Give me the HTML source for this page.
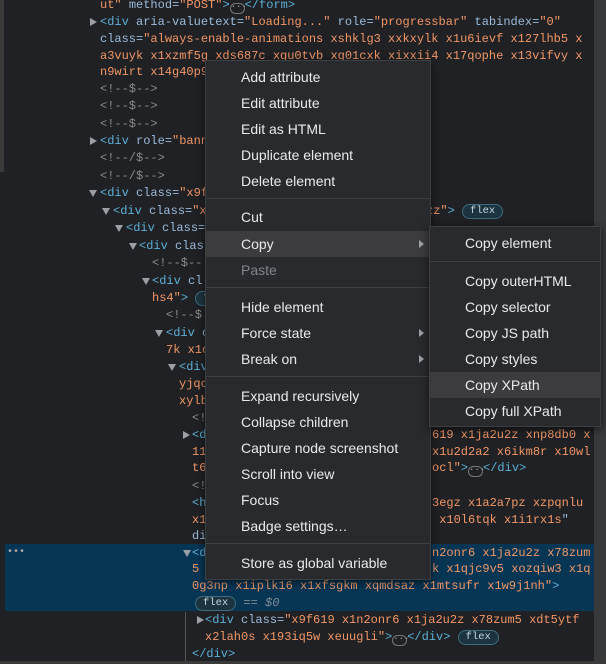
<!DOCTYPE html>
<html><head><meta charset="utf-8"><style>
*{margin:0;padding:0;box-sizing:border-box}
html,body{width:606px;height:664px;overflow:hidden;background:#202124}
body{position:relative;font-family:"Liberation Mono",monospace;font-size:12px}
.l{position:absolute;white-space:pre;height:17px;line-height:17px;color:#9aa0a6}
.t{color:#5db0d7}.a{color:#9bbbdc}.v{color:#f29766}.c{color:#8b8b8b}
.tri{position:absolute;width:0;height:0;border-left:4px solid transparent;border-right:4px solid transparent;border-top:7px solid #9aa0a6}
.trr{position:absolute;width:0;height:0;border-top:4px solid transparent;border-bottom:4px solid transparent;border-left:7px solid #9aa0a6}
.badge{display:inline-block;border:1px solid #3e6d80;background:#1c3440;color:#c6d6dd;border-radius:8px;font-size:10.5px;line-height:13px;padding:0 7px;vertical-align:1px}
.el{display:inline-block;width:15px;height:11px;border:1px solid #777;border-radius:6px;color:#aaa;font-size:9px;line-height:7px;text-align:center;vertical-align:-1px}
.sel{position:absolute;left:5px;top:544px;width:589px;height:67px;background:#073655}
.menu{position:absolute;background:#292a2d;border:1px solid #3c4043;box-shadow:0 2px 8px rgba(0,0,0,.6);font-family:"Liberation Sans",sans-serif;font-size:14px;color:#e8eaed}
.mi{position:absolute;left:0;right:0;height:26px;line-height:26px;white-space:nowrap}
.hv{background:#3c3c3f}
.sep{position:absolute;left:0;right:0;height:1px;background:#3c4043}
.arr{position:absolute;right:6px;top:9px;width:0;height:0;border-top:4px solid transparent;border-bottom:4px solid transparent;border-left:5px solid #9aa0a6}
</style></head><body>
<div style="position:absolute;left:0;top:0;width:4px;height:172px;background:#3a3a3a"></div>
<div style="position:absolute;left:594px;top:0;width:12px;height:664px;background:#38393b"></div>
<div class="sel"></div>
<div style="position:absolute;left:185px;top:612px;width:1px;height:52px;background:#555"></div>

<div class="l" style="left:100px;top:-3px"><span class="v">ut"</span> <span class="a">method=</span><span class="v">"POST"</span><span class="t">&gt;</span><span class="el">···</span><span class="t">&lt;/form&gt;</span></div>
<div class="trr" style="left:90px;top:18px"></div>
<div class="l" style="left:100px;top:14px"><span class="t">&lt;div</span> <span class="a">aria-valuetext=</span><span class="v">"Loading..."</span> <span class="a">role=</span><span class="v">"progressbar"</span> <span class="a">tabindex=</span><span class="v">"0"</span></div>
<div class="l" style="left:100px;top:31px"><span class="a">class=</span><span class="v">"always-enable-animations xshklg3 xxkxylk x1u6ievf x127lhb5 x</span></div>
<div class="l" style="left:100px;top:48px"><span class="v">a3vuyk x1xzmf5g xds687c xgu0tvb xg01cxk xixxii4 x17qophe x13vifvy x</span></div>
<div class="l" style="left:100px;top:64px"><span class="v">n9wirt x14g40p9</span></div>
<div class="l c" style="left:100px;top:81px">&lt;!--$--&gt;</div>
<div class="l c" style="left:100px;top:98px">&lt;!--$--&gt;</div>
<div class="l c" style="left:100px;top:116px">&lt;!--$--&gt;</div>
<div class="trr" style="left:90px;top:137px"></div>
<div class="l" style="left:100px;top:133px"><span class="t">&lt;div</span> <span class="a">role=</span><span class="v">"banner"</span></div>
<div class="l c" style="left:100px;top:150px">&lt;!--/$--&gt;</div>
<div class="l c" style="left:100px;top:168px">&lt;!--/$--&gt;</div>
<div class="tri" style="left:89px;top:190px"></div>
<div class="l" style="left:100px;top:185px"><span class="t">&lt;div</span> <span class="a">class=</span><span class="v">"x9f</span></div>
<div class="tri" style="left:102px;top:208px"></div>
<div class="l" style="left:113px;top:203px"><span class="t">&lt;div</span> <span class="a">class=</span><span class="v">"x</span></div>
<div class="l" style="left:426px;top:203px"><span class="v">zz"</span><span class="t">&gt;</span> <span class="badge">flex</span></div>
<div class="tri" style="left:115px;top:225px"></div>
<div class="l" style="left:126px;top:220px"><span class="t">&lt;div</span> <span class="a">class=</span></div>
<div class="tri" style="left:129px;top:243px"></div>
<div class="l" style="left:139px;top:238px"><span class="t">&lt;div</span> <span class="a">clas</span></div>
<div class="l c" style="left:152px;top:255px">&lt;!--$--</div>
<div class="tri" style="left:142px;top:278px"></div>
<div class="l" style="left:152px;top:273px"><span class="t">&lt;div</span> <span class="a">cl</span></div>
<div class="l" style="left:152px;top:290px"><span class="v">hs4"</span><span class="t">&gt;</span> <span class="badge">flex</span></div>
<div class="l c" style="left:166px;top:307px">&lt;!--$</div>
<div class="tri" style="left:155px;top:330px"></div>
<div class="l" style="left:166px;top:325px"><span class="t">&lt;div</span> <span class="a">c</span></div>
<div class="l" style="left:166px;top:342px"><span class="v">7k x1c</span></div>
<div class="tri" style="left:168px;top:364px"></div>
<div class="l" style="left:179px;top:359px"><span class="t">&lt;div</span></div>
<div class="l" style="left:179px;top:376px"><span class="v">yjqc</span></div>
<div class="l" style="left:179px;top:393px"><span class="v">xylb</span></div>
<div class="l c" style="left:192px;top:410px">&lt;!</div>
<div class="trr" style="left:183px;top:431px"></div>
<div class="l" style="left:192px;top:427px"><span class="t">&lt;d</span></div>
<div class="l" style="left:432px;top:427px"><span class="v">619 x1ja2u2z xnp8db0 x</span></div>
<div class="l" style="left:192px;top:444px"><span class="v">11</span></div>
<div class="l" style="left:432px;top:444px"><span class="v">x1u2d2a2 x6ikm8r x10wl</span></div>
<div class="l" style="left:192px;top:460px"><span class="v">t6</span></div>
<div class="l" style="left:432px;top:460px"><span class="v">ocl"</span><span class="t">&gt;</span><span class="el">···</span><span class="t">&lt;/div&gt;</span></div>
<div class="l c" style="left:192px;top:478px">&lt;!</div>
<div class="l" style="left:192px;top:495px"><span class="t">&lt;h</span></div>
<div class="l" style="left:432px;top:495px"><span class="v">3egz x1a2a7pz xzpqnlu</span></div>
<div class="l" style="left:192px;top:512px"><span class="v">x1</span></div>
<div class="l" style="left:432px;top:512px"><span class="v"> x10l6tqk x1i1rx1s</span><span class="a">"</span></div>
<div class="l" style="left:192px;top:528px"><span class="a">di</span></div>
<div class="l" style="left:7px;top:544px;color:#aaa;font-size:10px">•••</div>
<div class="tri" style="left:183px;top:550px"></div>
<div class="l" style="left:192px;top:545px"><span class="t">&lt;d</span></div>
<div class="l" style="left:432px;top:545px"><span class="v">n2onr6 x1ja2u2z x78zum</span></div>
<div class="l" style="left:192px;top:561px"><span class="v">5</span></div>
<div class="l" style="left:432px;top:561px"><span class="v">k x1qjc9v5 xozqiw3 x1q</span></div>
<div class="l" style="left:192px;top:578px"><span class="v">0g3np x1iplk16 x1xfsgkm xqmdsaz x1mtsufr x1w9j1nh"</span><span class="t">&gt;</span></div>
<div class="l" style="left:195px;top:595px"><span class="badge">flex</span> <span style="color:#7f8b96;font-style:italic">== $0</span></div>
<div class="trr" style="left:197px;top:616px"></div>
<div class="l" style="left:205px;top:612px"><span class="t">&lt;div</span> <span class="a">class=</span><span class="v">"x9f619 x1n2onr6 x1ja2u2z x78zum5 xdt5ytf</span></div>
<div class="l" style="left:205px;top:629px"><span class="v">x2lah0s x193iq5w xeuugli"</span><span class="t">&gt;</span><span class="el">···</span><span class="t">&lt;/div&gt;</span> <span class="badge">flex</span></div>
<div class="l" style="left:192px;top:646px"><span class="t">&lt;/div&gt;</span></div>
<div style="position:absolute;left:0;top:661px;width:606px;height:3px;background:#3a3a3a"></div>

<div class="menu" style="left:205px;top:60px;width:226px;height:520px">
<div class="mi" style="top:3px;padding-left:35px">Add attribute</div>
<div class="mi" style="top:29px;padding-left:35px">Edit attribute</div>
<div class="mi" style="top:55px;padding-left:35px">Edit as HTML</div>
<div class="mi" style="top:81px;padding-left:35px">Duplicate element</div>
<div class="mi" style="top:107px;padding-left:35px">Delete element</div>
<div class="sep" style="top:137px"></div>
<div class="mi" style="top:143px;padding-left:35px">Cut</div>
<div class="mi hv" style="top:170px;padding-left:35px">Copy<span class="arr"></span></div>
<div class="mi" style="top:196px;padding-left:35px;color:#80868b">Paste</div>
<div class="sep" style="top:226px"></div>
<div class="mi" style="top:233px;padding-left:35px">Hide element</div>
<div class="mi" style="top:259px;padding-left:35px">Force state<span class="arr"></span></div>
<div class="mi" style="top:285px;padding-left:35px">Break on<span class="arr"></span></div>
<div class="sep" style="top:315px"></div>
<div class="mi" style="top:322px;padding-left:35px">Expand recursively</div>
<div class="mi" style="top:348px;padding-left:35px">Collapse children</div>
<div class="mi" style="top:374px;padding-left:35px">Capture node screenshot</div>
<div class="mi" style="top:400px;padding-left:35px">Scroll into view</div>
<div class="mi" style="top:426px;padding-left:35px">Focus</div>
<div class="mi" style="top:452px;padding-left:35px">Badge settings…</div>
<div class="sep" style="top:482px"></div>
<div class="mi" style="top:489px;padding-left:35px">Store as global variable</div>
</div>

<div class="menu" style="left:429px;top:226px;width:172px;height:201px">
<div class="mi" style="top:3px;padding-left:35px">Copy element</div>
<div class="sep" style="top:34px"></div>
<div class="mi" style="top:41px;padding-left:35px">Copy outerHTML</div>
<div class="mi" style="top:67px;padding-left:35px">Copy selector</div>
<div class="mi" style="top:93px;padding-left:35px">Copy JS path</div>
<div class="mi" style="top:119px;padding-left:35px">Copy styles</div>
<div class="mi hv" style="top:145px;padding-left:35px">Copy XPath</div>
<div class="mi" style="top:171px;padding-left:35px">Copy full XPath</div>
</div>
</body></html>
